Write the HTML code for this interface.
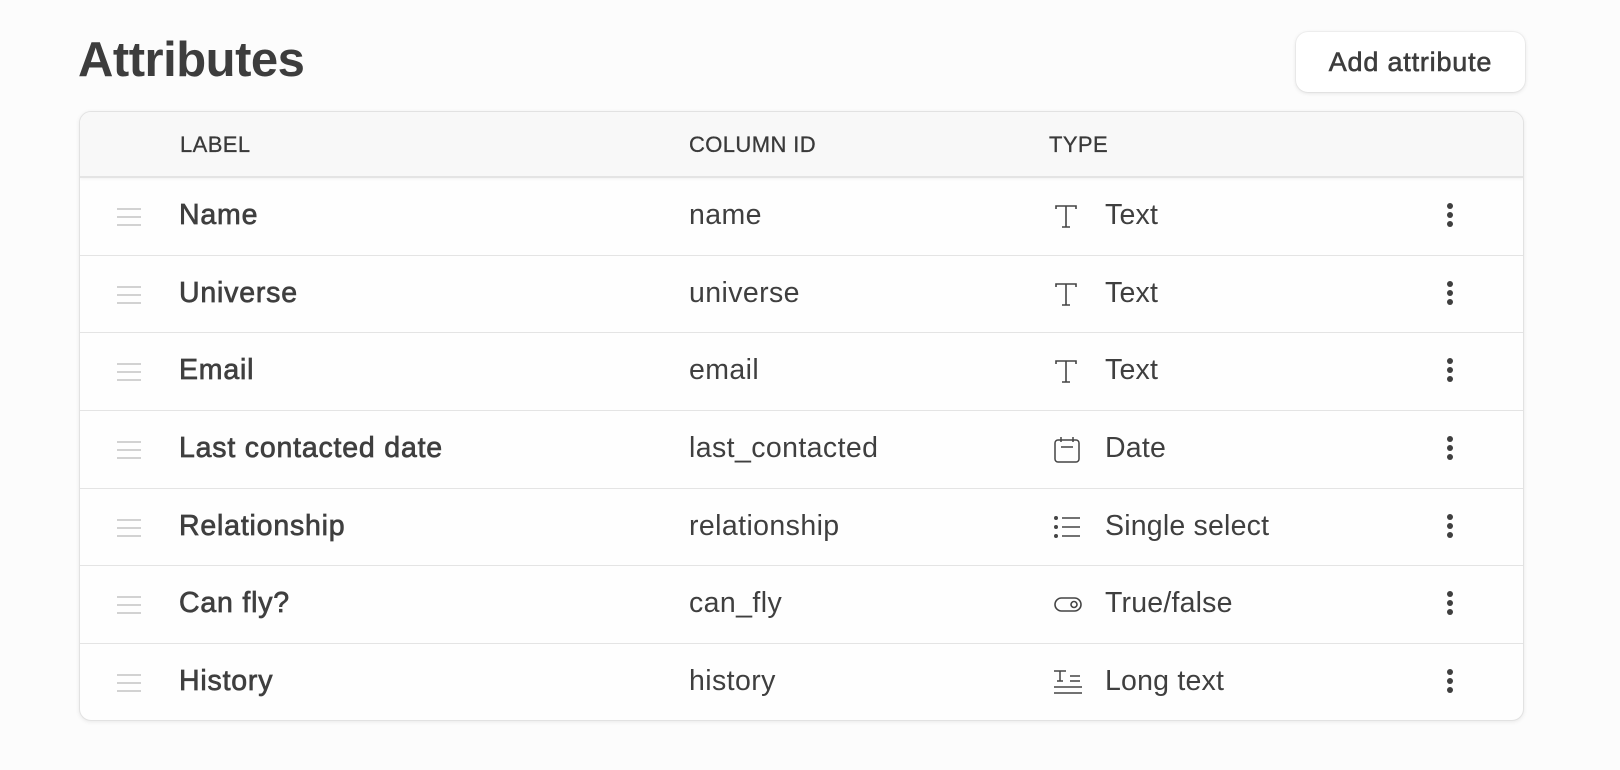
<!DOCTYPE html>
<html><head><meta charset="utf-8"><style>
*{box-sizing:border-box;margin:0;padding:0}
body{width:1620px;height:770px;background:#fcfcfc;font-family:"Liberation Sans",sans-serif;color:#3f3f3f;position:relative;overflow:hidden}
h1{position:absolute;left:78px;top:32px;font-size:49px;font-weight:bold;color:#3d3d3d;letter-spacing:-0.5px}
.btn{position:absolute;left:1296px;top:32px;width:229px;height:60px;background:#fff;border-radius:12px;box-shadow:0 1px 4px rgba(0,0,0,.12),0 0 0 1px rgba(0,0,0,.03);font-size:27px;color:#3d3d3d;text-align:center;line-height:60px;-webkit-text-stroke:0.6px #3d3d3d;letter-spacing:0.8px}
.card{position:absolute;left:79px;top:111px;width:1445px;height:610px;background:#fefefe;border:1px solid #e2e2e2;border-radius:12px;box-shadow:0 1px 4px rgba(0,0,0,.08);overflow:hidden}
.head{height:65px;background:#f8f8f8;border-bottom:1px solid #e4e4e4;box-shadow:0 2px 3px rgba(0,0,0,.05);position:relative;font-size:22px;color:#3a3a3a;letter-spacing:.4px;-webkit-text-stroke:0.3px #3a3a3a}
.head span{position:absolute;top:20px}
.row{height:77.7px;border-top:1px solid #e4e4e4;position:relative;font-size:28.5px}
.row:first-of-type{border-top:none}
.row > *{position:absolute}
.h{left:37px;top:30px;width:24px}
.h i{display:block;height:2px;background:#d2d2d2;margin-bottom:6px}
.l{left:99px;top:21px;color:#3f3f3f;-webkit-text-stroke:0.7px #3f3f3f;letter-spacing:0.8px}
.c{left:609px;top:21px;letter-spacing:0.4px}
.ic{left:973px;top:25px}
.t{left:1025px;top:21px;letter-spacing:0.2px}
.d{left:1367px;top:25px;width:6px}
.d i{display:block;width:6px;height:6px;border-radius:3px;background:#3f3f3f;margin-bottom:3px}
</style></head><body>
<h1>Attributes</h1>
<div class="btn">Add attribute</div>
<div class="card">
<div class="head"><span style="left:100px">LABEL</span><span style="left:609px">COLUMN ID</span><span style="left:969px">TYPE</span></div>
<div class="row"><div class="h"><i></i><i></i><i></i></div><div class="l">Name</div><div class="c">name</div>
<svg class="ic" width="26" height="26" viewBox="0 0 26 26" fill="none" stroke="#444" stroke-width="1.6"><path d="M3 6V3h20v3M13 3v21M9 24h8"/></svg><div class="t">Text</div><div class="d"><i></i><i></i><i></i></div></div>
<div class="row"><div class="h"><i></i><i></i><i></i></div><div class="l">Universe</div><div class="c">universe</div>
<svg class="ic" width="26" height="26" viewBox="0 0 26 26" fill="none" stroke="#444" stroke-width="1.6"><path d="M3 6V3h20v3M13 3v21M9 24h8"/></svg><div class="t">Text</div><div class="d"><i></i><i></i><i></i></div></div>
<div class="row"><div class="h"><i></i><i></i><i></i></div><div class="l">Email</div><div class="c">email</div>
<svg class="ic" width="26" height="26" viewBox="0 0 26 26" fill="none" stroke="#444" stroke-width="1.6"><path d="M3 6V3h20v3M13 3v21M9 24h8"/></svg><div class="t">Text</div><div class="d"><i></i><i></i><i></i></div></div>
<div class="row"><div class="h"><i></i><i></i><i></i></div><div class="l">Last contacted date</div><div class="c">last_contacted</div>
<svg class="ic" width="28" height="28" viewBox="0 0 28 28" fill="none" stroke="#444" stroke-width="1.5"><rect x="2" y="4" width="24" height="22" rx="3"/><path d="M8 1v5M20 1v5M8 11h12"/></svg><div class="t">Date</div><div class="d"><i></i><i></i><i></i></div></div>
<div class="row"><div class="h"><i></i><i></i><i></i></div><div class="l">Relationship</div><div class="c">relationship</div>
<svg class="ic" width="28" height="26" viewBox="0 0 28 26" fill="none" stroke="#444" stroke-width="1.6"><circle cx="3" cy="4" r="1.2" fill="#444"/><circle cx="3" cy="13" r="1.2" fill="#444"/><circle cx="3" cy="22" r="1.2" fill="#444"/><path d="M9 4h18M9 13h18M9 22h18"/></svg><div class="t">Single select</div><div class="d"><i></i><i></i><i></i></div></div>
<div class="row"><div class="h"><i></i><i></i><i></i></div><div class="l">Can fly?</div><div class="c">can_fly</div>
<svg class="ic" width="30" height="26" viewBox="0 0 30 26" fill="none" stroke="#444" stroke-width="1.6"><rect x="2" y="7" width="26" height="13" rx="6.5"/><circle cx="21" cy="13.5" r="3"/></svg><div class="t">True/false</div><div class="d"><i></i><i></i><i></i></div></div>
<div class="row"><div class="h"><i></i><i></i><i></i></div><div class="l">History</div><div class="c">history</div>
<svg class="ic" width="30" height="28" viewBox="0 0 30 28" fill="none" stroke="#444" stroke-width="1.5"><path d="M1 2h12M7 2v10M4 12h6M17 7h10M17 12h10M1 18h28M1 24h28"/></svg><div class="t">Long text</div><div class="d"><i></i><i></i><i></i></div></div>
</div>
</body></html>
